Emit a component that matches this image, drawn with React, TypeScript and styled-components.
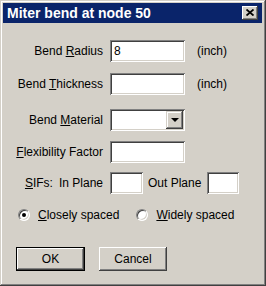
import styled, { createGlobalStyle } from "styled-components";

const GlobalStyle = createGlobalStyle`
  html, body {
    margin: 0;
    padding: 0;
    background: #d4d0c8;
  }
  body {
    font-family: "Liberation Sans", Arial, sans-serif;
    font-size: 12px;
    color: #000;
  }
`;

export default function App() {
  return (
    <>
      <GlobalStyle />
      <Window>
        <TitleBar>
          <Title>Miter bend at node 50</Title>
          <CloseButton>
            <svg width="8" height="7" viewBox="0 0 8 7">
              <path d="M0.5 0.5 L7.5 6.5 M7.5 0.5 L0.5 6.5" stroke="#000" strokeWidth="1.8" />
            </svg>
          </CloseButton>
        </TitleBar>

        <Body>
          <Fields>
            <Row>
              <Label>
                Bend <u>R</u>adius
              </Label>
              <Field $width={75}>8</Field>
              <Unit>(inch)</Unit>
            </Row>
            <Row>
              <Label>
                Bend <u>T</u>hickness
              </Label>
              <Field $width={75} />
              <Unit>(inch)</Unit>
            </Row>
            <Row $shift={3}>
              <Label>
                Bend <u>M</u>aterial
              </Label>
              <Combo>
                <DropButton>
                  <Arrow />
                </DropButton>
              </Combo>
            </Row>
            <Row $shift={2}>
              <Label>
                <u>F</u>lexibility Factor
              </Label>
              <Field $width={75} />
            </Row>
            <Row>
              <Label>
                <u>S</u>IFs:<Spaced>In Plane</Spaced>
              </Label>
              <Field $width={33} />
              <InlineLabel>Out Plane</InlineLabel>
              <Field $width={32} />
            </Row>
          </Fields>

          <Radios>
            <RadioItem>
              <RadioDot $checked />
              <span>
                <u>C</u>losely spaced
              </span>
            </RadioItem>
            <RadioItem>
              <RadioDot />
              <span>
                <u>W</u>idely spaced
              </span>
            </RadioItem>
          </Radios>

          <Buttons>
            <PushButton $default>OK</PushButton>
            <PushButton>Cancel</PushButton>
          </Buttons>
        </Body>
      </Window>
    </>
  );
}

const Window = styled.div`
  width: 266px;
  height: 286px;
  box-sizing: border-box;
  padding: 3px 4px 4px 3px;
  background: #d4d0c8;
  box-shadow: inset -1px -1px #404040, inset 1px 1px #d4d0c8,
    inset -2px -2px #808080, inset 2px 2px #fff;
  display: flex;
  flex-direction: column;
`;

const TitleBar = styled.div`
  height: 20px;
  background: #0a246a;
  display: flex;
  align-items: center;
  justify-content: space-between;
  padding: 0 4px 0 4px;
`;

const Title = styled.span`
  color: #fff;
  font-weight: bold;
  font-size: 14px;
`;

const CloseButton = styled.div`
  width: 16px;
  height: 14px;
  box-sizing: border-box;
  background: #d4d0c8;
  box-shadow: inset -1px -1px #404040, inset 1px 1px #fff,
    inset -2px -2px #808080, inset 2px 2px #d4d0c8;
  display: flex;
  align-items: center;
  justify-content: center;
  padding-bottom: 1px;
`;

const Body = styled.div`
  flex: 1;
  display: flex;
  flex-direction: column;
  padding-top: 17px;
`;

const Fields = styled.div`
  display: flex;
  flex-direction: column;
  gap: 11px;
`;

const Row = styled.div<{ $shift?: number }>`
  display: flex;
  align-items: center;
  height: 22px;
  margin-top: ${(p) => p.$shift ?? 0}px;
  margin-bottom: ${(p) => -(p.$shift ?? 0)}px;
`;

const Label = styled.div`
  width: 100px;
  margin-right: 7px;
  text-align: right;
  white-space: nowrap;
`;

const Spaced = styled.span`
  margin-left: 6px;
`;

const InlineLabel = styled.span`
  margin: 0 6px 0 5px;
  white-space: nowrap;
`;

const Unit = styled.span`
  margin-left: 12px;
`;

const sunken = `
  background: #fff;
  box-sizing: border-box;
  box-shadow: inset 1px 1px #808080, inset -1px -1px #fff,
    inset 2px 2px #404040, inset -2px -2px #d4d0c8;
`;

const Field = styled.div<{ $width: number }>`
  ${sunken}
  width: ${(p) => p.$width}px;
  height: 22px;
  padding: 0 4px;
  display: flex;
  align-items: center;
`;

const Combo = styled.div`
  ${sunken}
  width: 75px;
  height: 22px;
  padding: 2px;
  display: flex;
  justify-content: flex-end;
`;

const DropButton = styled.div`
  width: 17px;
  height: 18px;
  box-sizing: border-box;
  background: #d4d0c8;
  box-shadow: inset -1px -1px #404040, inset 1px 1px #d4d0c8,
    inset -2px -2px #808080, inset 2px 2px #fff;
  display: flex;
  align-items: center;
  justify-content: center;
`;

const Arrow = styled.span`
  width: 0;
  height: 0;
  border-left: 4px solid transparent;
  border-right: 4px solid transparent;
  border-top: 4px solid #000;
`;

const Radios = styled.div`
  display: flex;
  align-items: center;
  gap: 17px;
  margin-top: 14px;
  padding-left: 15px;
  height: 14px;
`;

const RadioItem = styled.label`
  display: flex;
  align-items: center;
  gap: 8px;
  white-space: nowrap;
`;

const RadioDot = styled.span<{ $checked?: boolean }>`
  width: 12px;
  height: 12px;
  box-sizing: border-box;
  border-radius: 50%;
  background: #fff;
  border: 1px solid;
  border-color: #808080 #fff #fff #808080;
  box-shadow: inset 1px 1px #404040, inset -1px -1px #d4d0c8;
  display: flex;
  align-items: center;
  justify-content: center;

  &::after {
    content: "";
    width: 4px;
    height: 4px;
    border-radius: 50%;
    background: ${(p) => (p.$checked ? "#000" : "transparent")};
  }
`;

const Buttons = styled.div`
  display: flex;
  gap: 14px;
  margin-top: 25px;
  padding-left: 13px;
`;

const PushButton = styled.div<{ $default?: boolean }>`
  width: ${(p) => (p.$default ? 69 : 68)}px;
  height: 24px;
  box-sizing: border-box;
  background: #d4d0c8;
  border: ${(p) => (p.$default ? "1px solid #000" : "none")};
  box-shadow: inset -1px -1px #404040, inset 1px 1px #fff,
    inset -2px -2px #808080, inset 2px 2px #d4d0c8;
  display: flex;
  align-items: center;
  justify-content: center;
  padding-bottom: 1px;
`;
